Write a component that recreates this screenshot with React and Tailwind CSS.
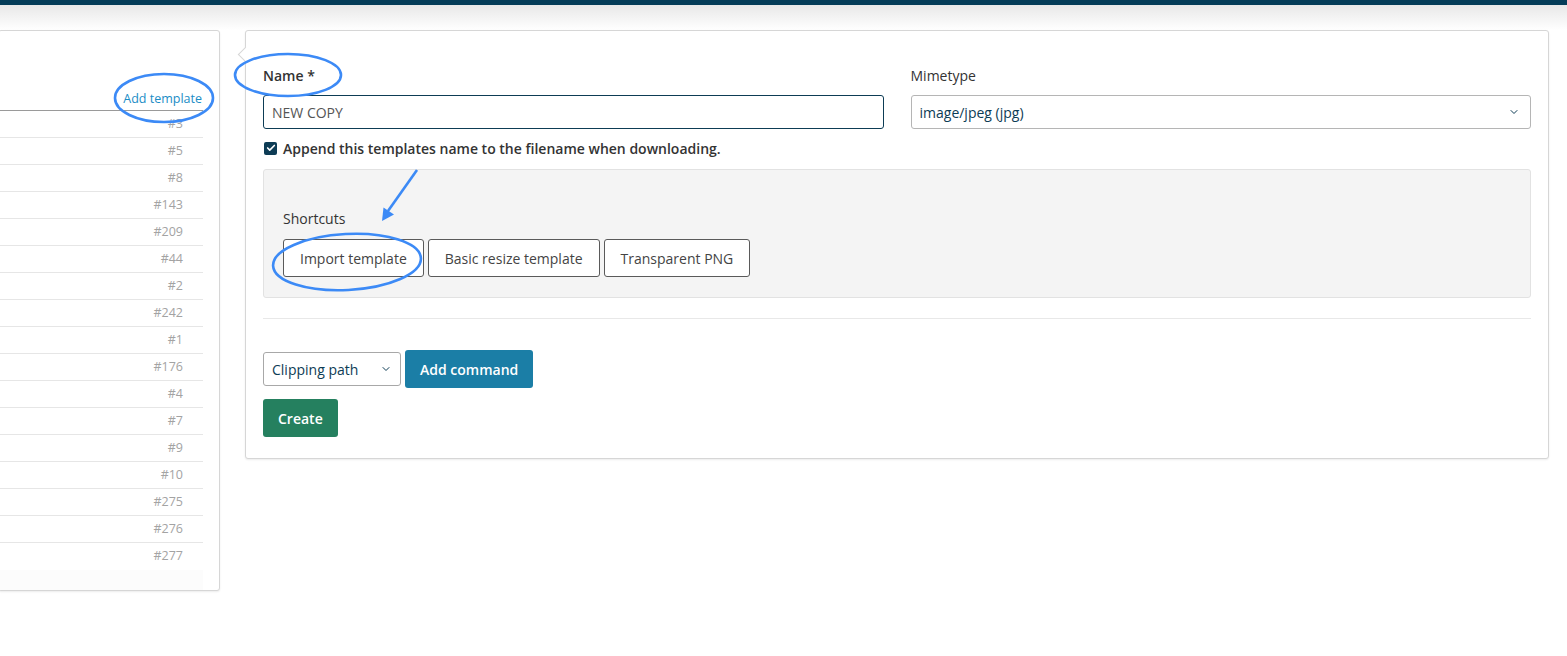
import { ChevronDown, Check } from 'lucide-react'

const ids = ['#3', '#5', '#8', '#143', '#209', '#44', '#2', '#242', '#1', '#176', '#4', '#7', '#9', '#10', '#275', '#276', '#277']

function TemplateList() {
  return (
    <div className="w-[222px] -ml-[2px] shrink-0 self-start bg-white border border-[#d6d6d6] rounded-[3px] shadow-[0_1px_2px_rgba(0,0,0,0.08)] pr-[16px]">
      <div className="h-[80px] flex items-end justify-end border-b border-[#9a9a9a] pb-[3px] pr-[1px]">
        <a className="text-[12.5px] text-[#1b8dc6] leading-[16px]">Add template</a>
      </div>
      {ids.map((id, i) => (
        <div key={id}
          className={'h-[27px] flex items-center justify-end pr-[20px] text-[12.5px] text-[#a3a3a3] ' + (i < ids.length - 1 ? 'border-b border-[#e6e6e6]' : '')}>
          {id}
        </div>
      ))}
      <div className="h-[20px] bg-[#fcfcfc]" />
    </div>
  )
}

function ShortcutButton({ children }) {
  return (
    <button className="h-[38px] px-[16px] bg-white border border-[#5a5a5a] rounded-[3px] text-[14px] text-[#444]">
      {children}
    </button>
  )
}

function TemplateForm() {
  return (
    <div className="relative w-[1304px] shrink-0 self-start bg-white border border-[#d6d6d6] rounded-[3px] shadow-[0_1px_2px_rgba(0,0,0,0.08)] px-[17px] pt-[35px] pb-[21px]">
      {/* pointer */}
      <div className="absolute -left-[6px] top-[18px] w-[11px] h-[11px] rotate-45 bg-white border-l border-b border-[#d6d6d6]" />

      <div className="grid grid-cols-2 gap-[27px]">
        <div>
          <label className="block text-[14px] font-semibold text-[#333] leading-[20px] mb-[9px]">Name *</label>
          <div className="h-[34px] border border-[#0d3c55] rounded-[3px] flex items-center px-[8px] text-[14px] text-[#555]">NEW COPY</div>
        </div>
        <div>
          <label className="block text-[14px] font-medium text-[#333] leading-[20px] mb-[9px]">Mimetype</label>
          <div className="h-[34px] border border-[#b5b5b5] rounded-[3px] flex items-center justify-between pl-[8px] pr-[10px] text-[14px] text-[#0d3c55]">
            <span>image/jpeg (jpg)</span>
            <ChevronDown size={12} strokeWidth={2} />
          </div>
        </div>
      </div>

      <div className="flex items-center gap-[6px] h-[20px] mt-[9px] mb-[11px]">
        <span className="w-[13px] h-[13px] ml-[1px] rounded-[2px] bg-[#0d3c55] flex items-center justify-center">
          <Check size={10} strokeWidth={4} color="white" />
        </span>
        <span className="text-[14px] font-semibold text-[#333]">Append this templates name to the filename when downloading.</span>
      </div>

      <div className="bg-[#f4f4f4] border border-[#e2e2e2] rounded-[3px] pl-[19px] pt-[39px] pb-[20px]">
        <div className="text-[14px] font-medium text-[#333] leading-[20px] mb-[10px]">Shortcuts</div>
        <div className="flex gap-[4px]">
          <ShortcutButton>Import template</ShortcutButton>
          <ShortcutButton>Basic resize template</ShortcutButton>
          <ShortcutButton>Transparent PNG</ShortcutButton>
        </div>
      </div>

      <hr className="mt-[20px] border-t border-[#e8e8e8]" />

      <div className="flex items-center gap-[4px] mt-[31px]">
        <div className="w-[138px] h-[34px] border border-[#a8a8a8] rounded-[3px] flex items-center justify-between pl-[8px] pr-[8px] text-[14px] text-[#0d3c55]">
          <span>Clipping path</span>
          <ChevronDown size={12} strokeWidth={2} />
        </div>
        <button className="h-[38px] px-[15px] bg-[#1b7ea6] rounded-[3px] text-[14px] font-semibold text-white">Add command</button>
      </div>
      <button className="mt-[11px] h-[38px] px-[15px] bg-[#25805f] rounded-[3px] text-[14px] font-semibold text-white">Create</button>
    </div>
  )
}

function Annotations() {
  const blue = '#3c8af6'
  return (
    <svg className="absolute inset-0 pointer-events-none" width="1567" height="656" viewBox="0 0 1567 656">
      <g fill="none" stroke={blue} strokeWidth="2.6">
        <ellipse cx="164" cy="98" rx="49" ry="24" />
        <ellipse cx="288" cy="75" rx="53" ry="21" />
        <ellipse cx="347" cy="262" rx="74" ry="28" transform="rotate(-3 347 262)" />
        <line x1="417" y1="170" x2="388" y2="211" />
      </g>
      <polygon points="382,221 394,214.5 383.5,207.5" fill={blue} />
    </svg>
  )
}

export default function App() {
  return (
    <div className="relative w-full h-[656px] overflow-hidden bg-white" style={{ fontFamily: '"Open Sans", "Noto Sans", sans-serif' }}>
      <div className="h-[5px] bg-[#043c58]" />
      <div className="h-[25px] bg-linear-to-b from-[#e8e8e8] to-white" />
      <div className="flex items-start gap-[25px]">
        <TemplateList />
        <TemplateForm />
      </div>
      <Annotations />
    </div>
  )
}
